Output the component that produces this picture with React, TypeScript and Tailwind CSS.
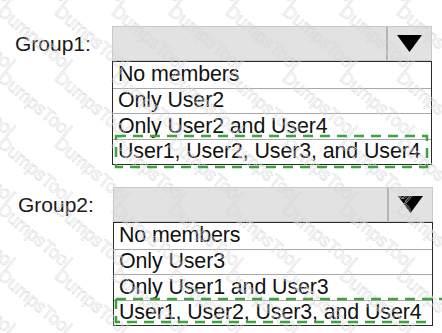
import React from 'react';

interface GroupSelectProps {
    label: string;
    options: string[];
    labelPad: string;
    shift: string;
}

const font = { fontFamily: '"Liberation Sans", Arial, sans-serif' };

const GroupSelect: React.FC<GroupSelectProps> = ({ label, options, labelPad, shift }) => {
    return (
        <div className="flex">
            {/* label */}
            <div className={`w-[112px] h-[35px] flex items-center text-[21px] text-[#1a1a1a] ${labelPad}`}>
                {label}
            </div>

            <div className={`flex flex-col w-[320px] ${shift}`}>
                {/* closed dropdown */}
                <div className="flex h-[35px] bg-[#e2e2e2] border border-[#c9c9c9]">
                    <div className="flex-grow" />
                    <div className="w-[45px] flex items-center justify-center border-l-2 border-l-[#b5b5b5]">
                        <svg width="25" height="17" viewBox="0 0 25 17">
                            <polygon points="0,0 25,0 12.5,17" fill="#000" />
                        </svg>
                    </div>
                </div>

                {/* open list */}
                <div className="flex flex-col border-[1.5px] border-[#2a2a2a] bg-white">
                    {options.map((opt, i) => (
                        <div
                            key={opt}
                            className={`h-[25.5px] flex items-center pl-[5px] text-[21.4px] leading-none tracking-[-0.1px] text-[#111] ${i > 0 ? 'border-t border-t-[#a8a8a8]' : ''}`}
                        >
                            {opt}
                        </div>
                    ))}
                </div>
            </div>
        </div>
    );
};

// faint diagonal "DumpsTool" stamps over the whole picture
const Watermark = () => {
    const marks: { x: number; y: number }[] = [];
    for (let r = -2; r < 6; r++) {
        for (let c = -1; c < 9; c++) {
            marks.push({ x: c * 57 + 6, y: r * 66 + 2 });
        }
    }
    return (
        <div className="absolute inset-0 overflow-hidden pointer-events-none">
            {marks.map((m, i) => (
                <span
                    key={i}
                    className="absolute text-[18px] leading-none text-transparent [-webkit-text-stroke:0.5px_#d6d6d6] rotate-[40deg] origin-top-left whitespace-nowrap"
                    style={{ left: m.x, top: m.y }}
                >
                    DumpsTool
                </span>
            ))}
        </div>
    );
};

// dashed green answer markers laid over the lists
const Highlights = () => (
    <svg className="absolute inset-0 pointer-events-none" width="442" height="333">
        <rect x="116" y="136" width="311" height="31" fill="none" stroke="#3da43d" strokeWidth="2.5" strokeDasharray="10 7" />
        <path d="M116 299 H442 M116 299 V322 H433" fill="none" stroke="#3da43d" strokeWidth="2.5" strokeDasharray="10 7" />
    </svg>
);

export default function App() {
    return (
        <div className="relative w-[442px] h-[333px] bg-white overflow-hidden" style={font}>
            <div className="flex flex-col pt-[26px] gap-[22px]">
                <GroupSelect
                    label="Group1:"
                    labelPad="pl-[15px]"
                    shift=""
                    options={['No members', 'Only User2', 'Only User2 and User4', 'User1, User2, User3, and User4']}
                />
                <GroupSelect
                    label="Group2:"
                    labelPad="pl-[18px]"
                    shift="ml-px"
                    options={['No members', 'Only User3', 'Only User1 and User3', 'User1, User2, User3, and User4']}
                />
            </div>

            <Watermark />
            <Highlights />
        </div>
    );
}
